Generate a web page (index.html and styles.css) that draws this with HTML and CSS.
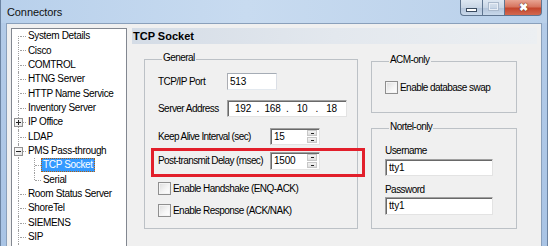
FILE: index.html
```html
<!DOCTYPE html>
<html>
<head>
<meta charset="utf-8">
<link rel="stylesheet" href="styles.css">
</head>
<body>
<div class="window">
  <div class="titlebar">
    <span class="title">Connectors</span>
    <div class="caps">
      <span class="cap min"><i></i></span>
      <span class="cap max"><i></i></span>
      <span class="cap close">&#x2716;</span>
    </div>
  </div>
  <div class="client">
    <div class="tree">
      <div class="node"><span class="br first"></span><span class="lbl">System Details</span></div>
      <div class="node"><span class="br"></span><span class="lbl">Cisco</span></div>
      <div class="node"><span class="br"></span><span class="lbl">COMTROL</span></div>
      <div class="node"><span class="br"></span><span class="lbl">HTNG Server</span></div>
      <div class="node"><span class="br"></span><span class="lbl">HTTP Name Service</span></div>
      <div class="node"><span class="br"></span><span class="lbl">Inventory Server</span></div>
      <div class="node"><span class="br"><span class="box plus"></span></span><span class="lbl">IP Office</span></div>
      <div class="node"><span class="br"></span><span class="lbl">LDAP</span></div>
      <div class="node"><span class="br"><span class="box"></span></span><span class="lbl">PMS Pass-through</span></div>
      <div class="node"><span class="br vonly"></span><span class="br2"></span><span class="lbl sel">TCP Socket</span></div>
      <div class="node"><span class="br vonly"></span><span class="br2 last"></span><span class="lbl">Serial</span></div>
      <div class="node"><span class="br"></span><span class="lbl">Room Status Server</span></div>
      <div class="node"><span class="br"></span><span class="lbl">ShoreTel</span></div>
      <div class="node"><span class="br"></span><span class="lbl">SIEMENS</span></div>
      <div class="node"><span class="br"></span><span class="lbl">SIP</span></div>
      <div class="node"><span class="br"></span></div>
    </div>
    <div class="panel">
      <div class="hdr">TCP Socket</div>
      <div class="content">
        <fieldset class="grp general">
          <legend>General</legend>
          <div class="row r1"><span class="flbl">TCP/IP Port</span><span class="tb port">513</span></div>
          <div class="row r2"><span class="flbl">Server Address</span><span class="tb sunk ip"><span class="oct">192</span><span class="dot">.</span><span class="oct">168</span><span class="dot">.</span><span class="oct">10</span><span class="dot">.</span><span class="oct">18</span></span></div>
          <div class="row r3"><span class="flbl">Keep Alive Interval (sec)</span><span class="tb sunk spin"><span class="val">15</span><span class="arrows"><span class="up"></span><span class="dn"></span></span></span></div>
          <div class="row r4 hl"><span class="flbl">Post-transmit Delay (msec)</span><span class="tb sunk spin"><span class="val">1500</span><span class="arrows"><span class="up"></span><span class="dn"></span></span></span></div>
          <div class="row r5"><span class="chk"></span><span class="clbl">Enable Handshake (ENQ-ACK)</span></div>
          <div class="row r6"><span class="chk"></span><span class="clbl">Enable Response (ACK/NAK)</span></div>
        </fieldset>
        <div class="col">
          <fieldset class="grp acm">
            <legend>ACM-only</legend>
            <div class="row a1"><span class="chk"></span><span class="clbl">Enable database swap</span></div>
          </fieldset>
          <fieldset class="grp nortel">
            <legend>Nortel-only</legend>
            <div class="nlbl n1">Username</div>
            <div class="tb sunk wide n2">tty1</div>
            <div class="nlbl n3">Password</div>
            <div class="tb sunk wide n4">tty1</div>
          </fieldset>
        </div>
      </div>
    </div>
  </div>
</div>
</body>
</html>
```
FILE: styles.css
```css
* { box-sizing: border-box; }
html, body { margin: 0; padding: 0; }
body {
  width: 548px; height: 246px; overflow: hidden;
  font-family: "Liberation Sans", Arial, sans-serif;
  font-size: 10px; letter-spacing: -0.35px; color: #000;
}
.window {
  width: 548px; height: 246px;
  background: linear-gradient(180deg, #c2d7ee 0px, #b3cbe8 23px, #a9c4e5 246px);
  border-left: 1px solid #6c84a2;
  border-right: 1px solid #6c84a2;
  display: flex; flex-direction: column;
}
.titlebar {
  height: 23px; flex: none;
  display: flex; align-items: flex-start;
  background: linear-gradient(90deg, #b8d0eb 0%, #c8dbf0 45%, #b9d0ea 100%);
}
.title { font-size: 11px; letter-spacing: -0.1px; margin: 5px 0 0 6px; color: #111; line-height: 14px; }
.caps { margin-left: auto; margin-right: 5px; display: flex; height: 16px; }
.cap {
  height: 16px; display: flex; align-items: center; justify-content: center;
  border: 1px solid #5f7590; border-top: none;
}
.min {
  width: 22px; border-radius: 0 0 0 4px; border-right: none;
  background: linear-gradient(180deg, #dde7f2 0%, #c9d6e6 50%, #b3c4da 51%, #c8d8ea 100%);
}
.min i { width: 11px; height: 4px; background: #fff; border: 1px solid #3a4b60; margin-top: 4px; }
.max {
  width: 22px; border-right: none;
  background: linear-gradient(180deg, #dde7f2 0%, #c9d6e6 50%, #b3c4da 51%, #c8d8ea 100%);
}
.max i { width: 9px; height: 7px; border: 1px solid #e8eef6; box-shadow: 0 0 0 1px #aab9cc; margin-top: -2px; }
.close {
  width: 38px; border-radius: 0 0 4px 0;
  background: linear-gradient(180deg, #e8a493 0%, #d7755f 45%, #c4462d 55%, #d2684f 100%);
  color: #fff; font-size: 11px; font-weight: bold; line-height: 11px; letter-spacing: 0;
  text-shadow: 0 0 1px #5a2010, 0 0 1px #5a2010;
}
.client {
  flex: 1; margin: 0 5px; background: #f0f0f0;
  border: 1px solid #8aa0bb; border-bottom: none;
  display: flex; align-items: stretch;
  padding: 4px 4px 0 4px; gap: 5px;
  min-height: 0;
}
/* tree */
.tree {
  width: 116px; flex: none; background: #fff;
  border: 1px solid #828790; border-bottom: none;
  overflow: hidden;
}
.node { display: flex; align-items: center; height: 14.36px; white-space: nowrap; }
.br { position: relative; width: 16px; height: 100%; flex: none; }
.br::before { content: ""; position: absolute; left: 6px; top: 0; bottom: 0; border-left: 1px dotted #a0a0a0; }
.br::after { content: ""; position: absolute; left: 8px; width: 6px; top: 7px; border-top: 1px dotted #a0a0a0; }
.br.first::before { top: 7px; }
.br.vonly::after { display: none; }
.br2 { position: relative; width: 15px; height: 100%; flex: none; }
.br2::before { content: ""; position: absolute; left: 6px; top: 0; bottom: 0; border-left: 1px dotted #a0a0a0; }
.br2::after { content: ""; position: absolute; left: 7px; width: 6px; top: 7px; border-top: 1px dotted #a0a0a0; }
.br2.last::before { bottom: 7px; }
.box {
  position: absolute; left: 2px; top: 3px; width: 9px; height: 9px; z-index: 1;
  border: 1px solid #919191; background: linear-gradient(135deg, #fff, #e3e3e3);
}
.box::before { content: ""; position: absolute; left: 1px; right: 1px; top: 3px; height: 1px; background: #222; }
.box.plus::after { content: ""; position: absolute; top: 1px; bottom: 1px; left: 3px; width: 1px; background: #222; }
.lbl { line-height: 14px; padding-left: 0; }
.lbl.sel {
  margin-left: -2px; padding: 0 2px; height: 14px;
  background: #3399ff; color: #fff; outline: 1px dotted #b06010; outline-offset: -1px;
}
/* panel */
.panel { width: 405px; flex: none; display: flex; flex-direction: column; }
.hdr {
  height: 16px; flex: none; padding-left: 1px;
  font-weight: bold; font-size: 11px; letter-spacing: 0; line-height: 16px;
  background: linear-gradient(90deg, #d4dce6 0%, #e3e8ee 50%, #eceff2 100%);
}
.content { display: flex; align-items: flex-start; padding-left: 12px; margin-top: 8px; letter-spacing: -0.55px; }
.grp {
  margin: 0; padding: 0; min-width: 0;
  border: 1px solid #bcc1c6;
  display: block;
}
.grp legend {
  margin-left: 4px; padding: 0 1px 2px 1px; line-height: 12px;
}
.general { width: 214px; height: 177px; padding-left: 13px; }
.col { margin-left: 13px; margin-top: 2px; display: flex; flex-direction: column; gap: 8px; }
.acm { width: 146px; height: 59px; padding-left: 13px; }
.nortel { width: 146px; height: 108px; padding-left: 13px; }
.row { display: flex; align-items: center; white-space: nowrap; }
.flbl { line-height: 12px; flex: none; white-space: nowrap; }
.r1 { margin-top: 7px; height: 17px; }
.r2 { margin-top: 10px; height: 17px; }
.r3 { margin-top: 11px; height: 17px; }
.r4 { margin-top: 7px; height: 18px; }
.r5 { margin-top: 12px; height: 13px; }
.r6 { margin-top: 9px; height: 13px; }
.r1 .flbl, .r2 .flbl { width: 69px; }
.r3 .flbl, .r4 .flbl { width: 112px; letter-spacing: -0.6px; }
.tb {
  height: 17px; background: #fff; display: flex; align-items: center; flex: none;
  border: 1px solid; border-color: #a5acb5 #dbdfe6 #e3e9ef #abadb3;
  padding-left: 2px; line-height: 12px; letter-spacing: -0.2px;
}
.tb.sunk { border-color: #a0a0a0 #e3e3e3 #e3e3e3 #a0a0a0; box-shadow: inset 1px 1px 0 #696969; padding-left: 3px; }
.port { width: 50px; }
.ip { width: 120px; padding-left: 2px; }
.oct { width: 24px; text-align: center; }
.dot { width: 5.5px; text-align: center; }
.spin { width: 50px; height: 17px; position: relative; }
.r4 .spin { height: 18px; }
.val { flex: 1; }
.arrows { display: flex; flex-direction: column; width: 12px; height: 100%; padding: 1px 2px 1px 0; gap: 1px; }
.arrows span {
  flex: 1; position: relative;
  background: linear-gradient(180deg, #f4f4f4, #dedede);
  border: 1px solid #c7c7c7;
}
.arrows span::after {
  content: ""; position: absolute; left: 3px; width: 3px; height: 1px; background: #222;
}
.arrows .up::after { top: 2px; }
.arrows .dn::after { top: 2px; }
.hl { position: relative; }
.hl::after {
  content: ""; position: absolute; left: -7px; right: -8px; top: -4px; bottom: -7px;
  border: 3px solid #e21f2b;
}
.chk {
  width: 13px; height: 13px; flex: none;
  border: 1px solid #8f8f8f;
  background: linear-gradient(135deg, #dcdcdc 0%, #f6f6f6 60%, #fff 100%);
  box-shadow: inset 0 0 0 1px #f4f4f4;
}
.clbl { margin-left: 2px; line-height: 12px; }
.a1 { margin-top: 13px; height: 13px; }
.nlbl { line-height: 12px; }
.n1 { margin-top: 10px; }
.wide { width: 108px; padding-left: 2px; }
.n2 { margin-top: 2px; height: 17px; }
.n3 { margin-top: 8px; }
.n4 { margin-top: 1px; height: 18px; }
```
